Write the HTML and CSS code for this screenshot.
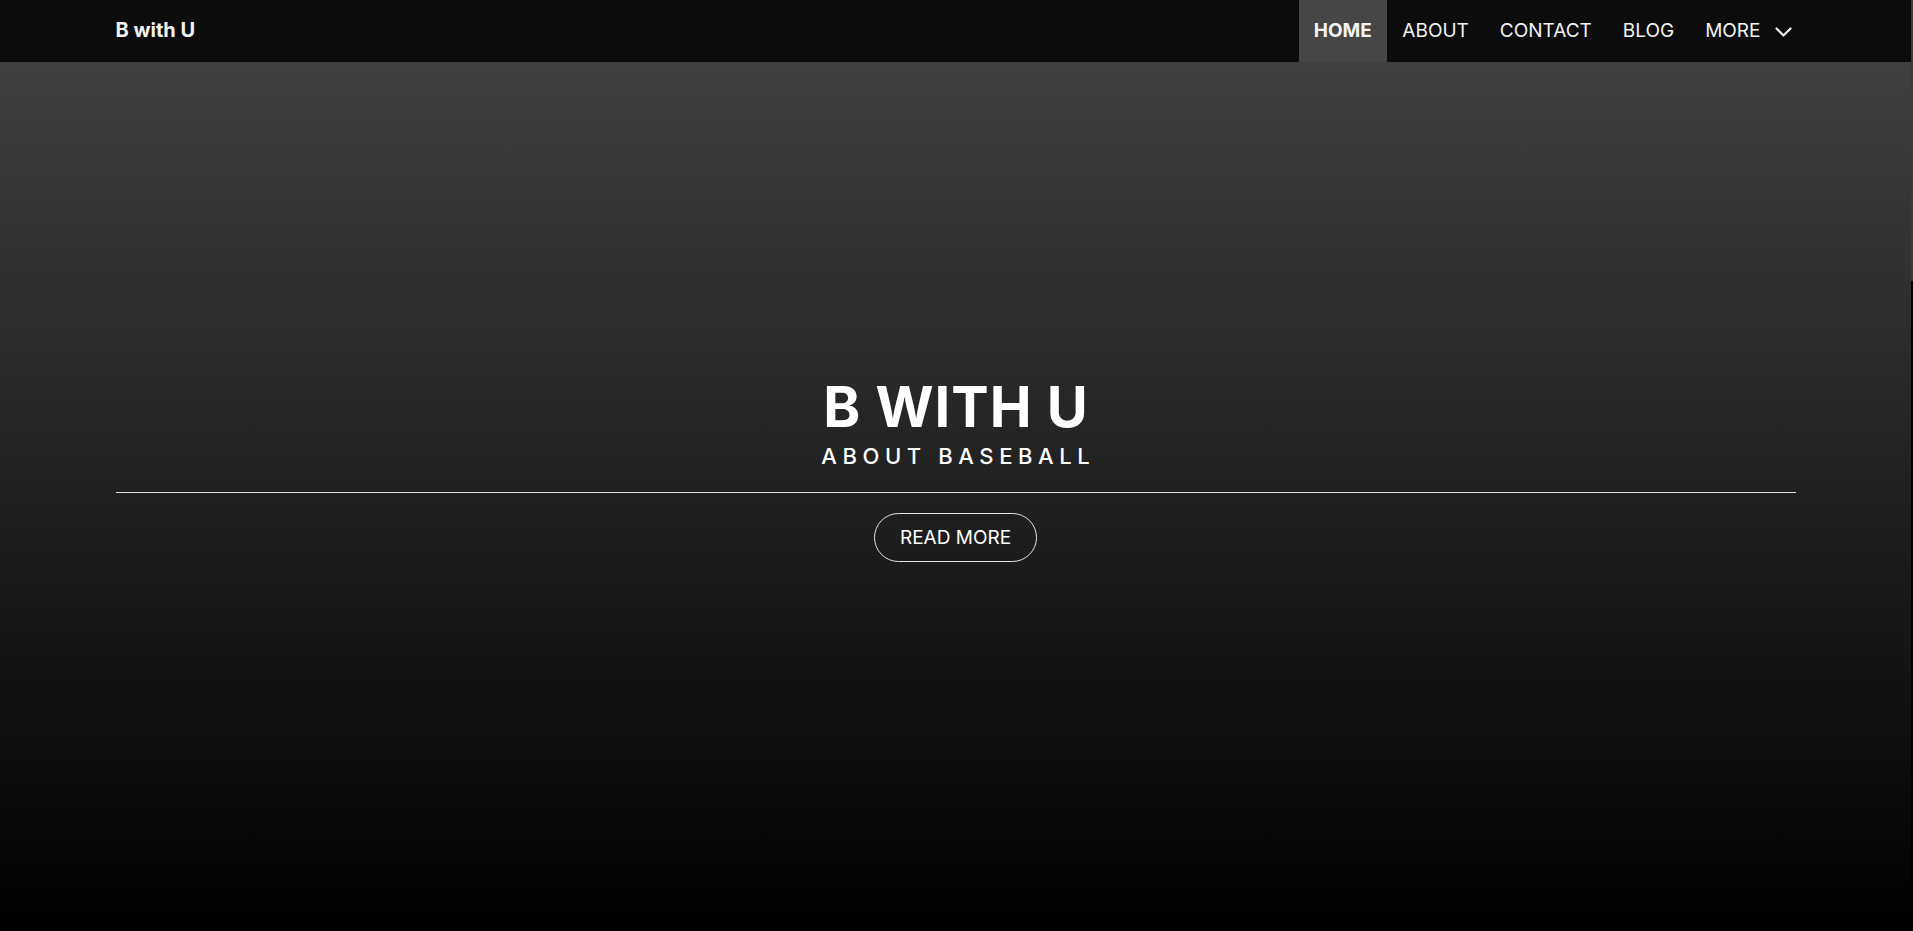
FILE: index.html
```html
<!DOCTYPE html>
<html lang="en">
<head>
<meta charset="utf-8">
<title>B with U</title>
<link rel="stylesheet" href="styles.css">
</head>
<body>
<div class="page">
  <header class="topbar">
    <div class="container nav-inner">
      <a class="brand" href="#">B with U</a>
      <ul class="menu">
        <li class="menu-item active"><a href="#">HOME</a></li>
        <li class="menu-item"><a href="#">ABOUT</a></li>
        <li class="menu-item"><a href="#">CONTACT</a></li>
        <li class="menu-item"><a href="#">BLOG</a></li>
        <li class="menu-item more"><a href="#">MORE
          <svg class="chev" width="17" height="10" viewBox="0 0 17 10"><path d="M1.5 1.5 L8.5 8.5 L15.5 1.5" fill="none" stroke="#f2f2f2" stroke-width="2.2" stroke-linecap="round" stroke-linejoin="round"/></svg></a></li>
      </ul>
    </div>
  </header>
  <section class="hero">
    <div class="container hero-inner">
      <h1 class="hero-title">B WITH U</h1>
      <p class="hero-sub">ABOUT BASEBALL</p>
      <hr class="hero-rule">
      <a class="btn-outline" href="#">READ MORE</a>
    </div>
  </section>
</div>
<div class="scroll-thumb"></div>
</body>
</html>
```
FILE: styles.css
```css
* { box-sizing: border-box; }
html, body { margin: 0; padding: 0; height: 100%; background: #000; }
body { font-family: "Inter", "Liberation Sans", sans-serif; color: #f5f5f5; overflow: hidden; }
a { color: inherit; text-decoration: none; }

.page { width: 1911px; height: 931px; display: flex; flex-direction: column; }
.container { width: 100%; padding: 0 115.5px; }

.topbar { height: 62px; background: #0c0c0c; flex: none; }
.nav-inner { display: flex; align-items: center; justify-content: space-between; height: 100%; }
.brand { font-weight: 700; font-size: 20px; color: #f2f2f2; padding-bottom: 2px; }
.menu { list-style: none; margin: 0; padding: 0; display: flex; height: 100%; }
.menu-item { height: 100%; }
.menu-item a { display: flex; align-items: center; height: 100%; padding: 0 15.5px 2px; font-size: 19px; color: #f2f2f2; }
.menu-item.active a { background: #464646; font-weight: 700; padding: 0 15px 2px; }
.menu-item.more a { padding-right: 4px; }
.chev { margin-left: 14px; margin-top: 3px; }

.hero { flex: 1; background: linear-gradient(#404040, #000); }
.hero-inner { display: flex; flex-direction: column; align-items: center; padding-top: 310px; }
.hero-title { margin: 0; font-size: 56px; font-weight: 700; line-height: 70px; letter-spacing: 1px; padding-left: 1px; color: #fff; }
.hero-sub { margin: 0; font-size: 22px; font-weight: 500; letter-spacing: 5.6px; line-height: 28px; color: #fff; padding-left: 5.6px; }
.hero-rule { width: 100%; border: 0; border-top: 1px solid #e0e0e0; margin: 22px 0 0; }
.btn-outline { margin-top: 20px; width: 163px; height: 49px; border: 1px solid #e6e6e6; border-radius: 25px; display: flex; align-items: center; justify-content: center; font-size: 19px; color: #fff; }

.scroll-thumb { position: fixed; top: 0; right: 0; width: 2px; height: 281px; background: #3a3a3a; }
```
